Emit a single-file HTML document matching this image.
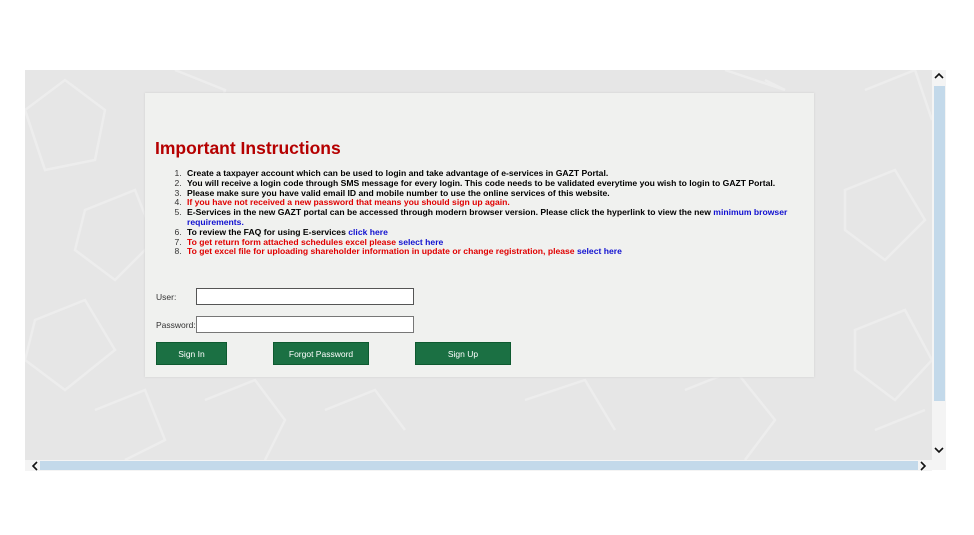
<!DOCTYPE html>
<html><head><meta charset="utf-8"><style>
*{margin:0;padding:0;box-sizing:border-box}
body{width:974px;height:535px;background:#fff;position:relative;overflow:hidden;font-family:"Liberation Sans",Arial,sans-serif}
.bg{position:absolute;left:25px;top:70px;width:907px;height:390px;background:#e6e6e6;overflow:hidden}
.vs{position:absolute;left:932px;top:70px;width:14px;height:400px;background:#f4f4f4}
.vthumb{position:absolute;left:934px;top:86px;width:11px;height:315px;background:#c3d9ea}
.hs{position:absolute;left:25px;top:460px;width:907px;height:11px;background:#f4f4f4}
.hthumb{position:absolute;left:40px;top:461px;width:878px;height:9px;background:#c3d9ea}
.panel{position:absolute;left:145px;top:93px;width:669px;height:284px;background:#f0f1ef;box-shadow:0 0 2px #ccc}
h1{position:absolute;left:10px;top:45px;font-size:17.5px;color:#b50000;font-weight:bold}
ol{position:absolute;left:27px;top:76px;width:630px;font-size:8.6px;font-weight:bold;line-height:9.8px;padding-left:12px}
ol li{padding-left:3px}
ol li::marker{font-weight:normal;color:#333}
.r{color:#e00000}.b{color:#1010d0}
.lbl{position:absolute;font-size:8.5px;color:#333}
.in{position:absolute;left:51px;width:218px;height:17px;background:#fff;border:1px solid #777}
.btn{position:absolute;top:249px;height:23px;background:#1b7043;color:#fff;font-size:8.5px;text-align:center;line-height:23px;border:1px solid #0e5a30}
</style></head><body>
<div class="bg">
<svg width="907" height="390" style="position:absolute;left:0;top:0" fill="none" stroke="#ededed" stroke-width="2.5">
<path d="M0 40 L40 10 L80 40 L70 90 L20 100 Z M60 140 L110 120 L130 170 L90 210 L50 180 Z M10 250 L60 230 L90 280 L40 320 L0 290 Z M70 340 L120 320 L140 370 L100 390 M840 20 L890 0 L907 50 M820 120 L870 100 L900 150 L860 190 L820 160 Z M830 260 L880 240 L907 290 L870 330 L830 300 Z M850 360 L900 340"/>
<path d="M180 330 L230 310 L260 350 L240 390 M300 340 L350 320 L380 360 M500 330 L560 310 L590 360 M660 320 L710 300 L750 350 L720 390 M150 0 L200 20 L190 60 M700 0 L760 20 L740 10"/>
</svg>
</div>
<div class="vs"></div><div class="vthumb"></div>
<div class="hs"></div><div class="hthumb"></div>
<svg width="974" height="535" style="position:absolute;left:0;top:0" fill="none" stroke="#111" stroke-width="1.6">
<path d="M935 78 L939 74 L943 78"/>
<path d="M935 448 L939 452 L943 448"/>
<path d="M37 462 L33 466 L37 470"/>
<path d="M921 462 L925 466 L921 470"/>
</svg>
<div class="panel">
<h1>Important Instructions</h1>
<ol>
<li>Create a taxpayer account which can be used to login and take advantage of e-services in GAZT Portal.</li>
<li>You will receive a login code through SMS message for every login. This code needs to be validated everytime you wish to login to GAZT Portal.</li>
<li>Please make sure you have valid email ID and mobile number to use the online services of this website.</li>
<li class="r">If you have not received a new password that means you should sign up again.</li>
<li>E-Services in the new GAZT portal can be accessed through modern browser version. Please click the hyperlink to view the new <span class="b">minimum browser requirements.</span></li>
<li>To review the FAQ for using E-services <span class="b">click here</span></li>
<li class="r">To get return form attached schedules excel please <span class="b">select here</span></li>
<li class="r">To get excel file for uploading shareholder information in update or change registration, please <span class="b">select here</span></li>
</ol>
<div class="lbl" style="left:11px;top:199px">User:</div>
<div class="in" style="top:195px;border:1.5px solid #555"></div>
<div class="lbl" style="left:11px;top:227px">Password:</div>
<div class="in" style="top:223px"></div>
<div class="btn" style="left:11px;width:71px">Sign In</div>
<div class="btn" style="left:128px;width:96px">Forgot Password</div>
<div class="btn" style="left:270px;width:96px">Sign Up</div>
</div>
</body></html>
